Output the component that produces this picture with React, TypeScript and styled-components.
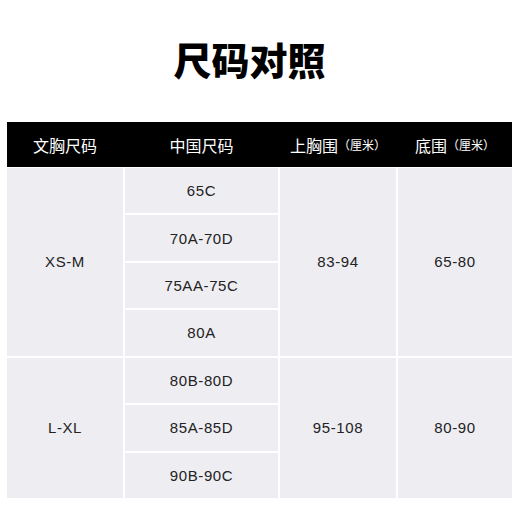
import React from "react";
import styled, { createGlobalStyle } from "styled-components";

const Global = createGlobalStyle`
  html, body { margin: 0; padding: 0; background: #ffffff; }
  body { font-family: "Liberation Sans", "Noto Sans CJK SC", sans-serif; }
`;

const Page = styled.div`
  width: 520px;
  height: 520px;
  box-sizing: border-box;
  padding: 40px 8px 0 7px;
  display: flex;
  flex-direction: column;
`;

const Title = styled.h1`
  margin: 0 20px 0 0;
  text-align: center;
  font-family: "Noto Sans CJK SC", sans-serif;
  font-weight: 900;
  font-size: 38px;
  line-height: 38px;
  color: #000;
`;

const Table = styled.div`
  margin-top: 44px;
  width: 505px;
  display: flex;
  flex-direction: column;
  gap: 1px;
`;

const columns = "116px 153px 116px 114px";

const Header = styled.div`
  display: grid;
  grid-template-columns: ${columns};
  column-gap: 2px;
  height: 45px;
  background: #000;
`;

const HeadCell = styled.div`
  display: flex;
  align-items: center;
  justify-content: center;
  color: #fff;
  font-family: "Noto Sans CJK SC", sans-serif;
  font-size: 16px;
  font-weight: 400;
`;

const Unit = styled.span`
  font-size: 12px;
  margin-left: 0px;
`;

const Body = styled.div`
  display: grid;
  grid-template-columns: ${columns};
  grid-template-rows: repeat(7, 1fr);
  gap: 2px;
  height: 330px;
  background: #ffffff;
`;

const Cell = styled.div<{ $row: number; $span?: number; $col: number }>`
  grid-column: ${(p) => p.$col};
  grid-row: ${(p) => p.$row} / span ${(p) => p.$span ?? 1};
  background: #eeedf2;
  display: flex;
  align-items: center;
  justify-content: center;
  color: #222;
  font-family: "Liberation Sans", "Noto Sans CJK SC", sans-serif;
  font-size: 15px;
  letter-spacing: 0.6px;
`;

const groups = [
  { size: "XS-M", cn: ["65C", "70A-70D", "75AA-75C", "80A"], bust: "83-94", under: "65-80" },
  { size: "L-XL", cn: ["80B-80D", "85A-85D", "90B-90C"], bust: "95-108", under: "80-90" },
];

export default function App() {
  let row = 1;
  const cells: React.ReactNode[] = [];
  groups.forEach((g, gi) => {
    const start = row;
    const n = g.cn.length;
    cells.push(
      <Cell key={`s${gi}`} $col={1} $row={start} $span={n}>{g.size}</Cell>
    );
    g.cn.forEach((c, i) => {
      cells.push(
        <Cell key={`c${gi}-${i}`} $col={2} $row={start + i}>{c}</Cell>
      );
    });
    cells.push(
      <Cell key={`b${gi}`} $col={3} $row={start} $span={n}>{g.bust}</Cell>
    );
    cells.push(
      <Cell key={`u${gi}`} $col={4} $row={start} $span={n}>{g.under}</Cell>
    );
    row += n;
  });

  return (
    <>
      <Global />
      <Page>
        <Title>尺码对照</Title>
        <Table>
          <Header>
            <HeadCell>文胸尺码</HeadCell>
            <HeadCell>中国尺码</HeadCell>
            <HeadCell>上胸围<Unit>（厘米）</Unit></HeadCell>
            <HeadCell>底围<Unit>（厘米）</Unit></HeadCell>
          </Header>
          <Body>{cells}</Body>
        </Table>
      </Page>
    </>
  );
}
